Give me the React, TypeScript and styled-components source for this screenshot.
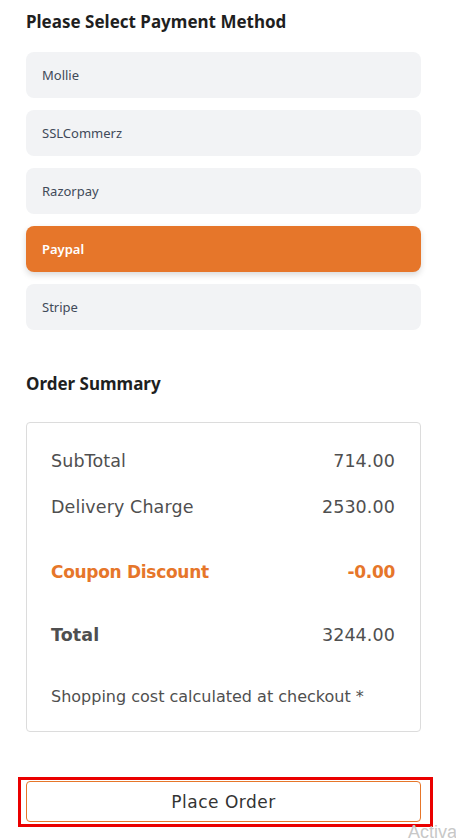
import React from 'react';
import styled, { createGlobalStyle } from 'styled-components';

const GlobalStyle = createGlobalStyle`
  html, body {
    margin: 0;
    padding: 0;
    background: #fff;
  }
  body {
    font-family: 'Noto Sans', 'Open Sans', sans-serif;
    overflow: hidden;
  }
  * {
    box-sizing: border-box;
  }
`;

const methods = ['Mollie', 'SSLCommerz', 'Razorpay', 'Paypal', 'Stripe'];

const App: React.FC = () => {
  return (
    <StylePage>
      <GlobalStyle />
      <StyleTitle>Please Select Payment Method</StyleTitle>
      <StyleMethods>
        {methods.map((m) => (
          <StyleMethod key={m} active={m === 'Paypal'}>
            {m}
          </StyleMethod>
        ))}
      </StyleMethods>

      <StyleTitle summary>Order Summary</StyleTitle>
      <StyleSummary>
        <StyleRow>
          <span>SubTotal</span>
          <span>714.00</span>
        </StyleRow>
        <StyleRow>
          <span>Delivery Charge</span>
          <span>2530.00</span>
        </StyleRow>
        <StyleRow variant="coupon">
          <span>Coupon Discount</span>
          <span>-0.00</span>
        </StyleRow>
        <StyleRow variant="total">
          <span>Total</span>
          <span>3244.00</span>
        </StyleRow>
        <StyleNote>Shopping cost calculated at checkout *</StyleNote>
      </StyleSummary>

      <StyleHighlight>
        <StyleOrderBtn>Place Order</StyleOrderBtn>
      </StyleHighlight>
      <StyleWatermark>Activa</StyleWatermark>
    </StylePage>
  );
};

const StylePage = styled.div`
  position: relative;
  width: 456px;
  height: 839px;
  padding: 10px 35px 0 26px;
  overflow: hidden;
`;

const StyleTitle = styled.h2<{ summary?: boolean }>`
  margin: ${(props) => (props.summary ? '42px 0 0' : '0')};
  font-size: 17px;
  font-weight: 700;
  line-height: 24px;
  color: #1f1f1f;
`;

const StyleMethods = styled.div`
  display: flex;
  flex-direction: column;
  gap: 12px;
  margin-top: 18px;
`;

const StyleMethod = styled.div<{ active?: boolean }>`
  height: 46px;
  display: flex;
  align-items: center;
  padding-left: 16px;
  border-radius: 8px;
  font-size: 13px;
  font-weight: ${(props) => (props.active ? 600 : 400)};
  background: ${(props) => (props.active ? '#e6762a' : '#f2f3f5')};
  color: ${(props) => (props.active ? '#fff' : '#414a59')};
  box-shadow: ${(props) => (props.active ? '0 3px 6px rgba(0, 0, 0, 0.15)' : 'none')};
`;

const StyleSummary = styled.div`
  margin-top: 26px;
  border: 1px solid #dcdcdc;
  border-radius: 4px;
  padding: 26px 25px 26px 24px;
  height: 310px;
  font-family: 'DejaVu Sans', 'Open Sans', sans-serif;
`;

const StyleRow = styled.div<{ variant?: 'coupon' | 'total' }>`
  display: flex;
  justify-content: space-between;
  align-items: center;
  height: 24px;
  font-size: ${(props) => (props.variant === 'coupon' ? '17px' : '17.5px')};
  letter-spacing: ${(props) => (props.variant === 'coupon' ? '-0.3px' : '0.1px')};
  margin-top: ${(props) => (props.variant === 'coupon' ? '41px' : '0')};
  margin-bottom: ${(props) => (props.variant === 'coupon' ? '39px' : props.variant === 'total' ? '38px' : '22px')};
  color: ${(props) => (props.variant === 'coupon' ? '#e6762a' : '#4f4f4f')};
  font-weight: ${(props) => (props.variant === 'coupon' ? 700 : 400)};
  span:first-child {
    font-weight: ${(props) => (props.variant ? 700 : 400)};
  }
`;

const StyleNote = styled.p`
  margin: 0;
  font-size: 16px;
  line-height: 24px;
  color: #4f4f4f;
`;

const StyleHighlight = styled.div`
  margin: 45px -12px 0 -8px;
  border: 3px solid #ea0000;
  padding: 1px 9px 2px 5px;
`;

const StyleOrderBtn = styled.button`
  display: block;
  width: 100%;
  height: 41px;
  border: 1px solid #e6762a;
  border-radius: 4px;
  background: #fff;
  font-family: 'DejaVu Sans', 'Open Sans', sans-serif;
  font-size: 17px;
  letter-spacing: 0.5px;
  color: #333;
`;

const StyleWatermark = styled.div`
  position: absolute;
  left: 408px;
  top: 822px;
  white-space: nowrap;
  font-family: 'Liberation Sans', sans-serif;
  font-size: 18px;
  color: #c8c8c8;
`;

export default App;
